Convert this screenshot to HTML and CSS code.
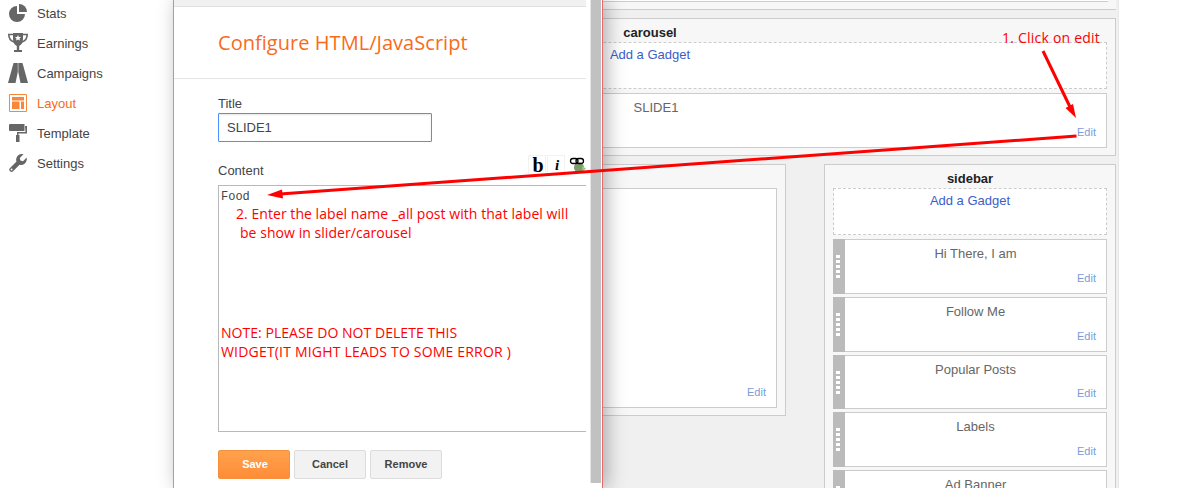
FILE: index.html
```html
<!DOCTYPE html>
<html lang="en">
<head>
<meta charset="utf-8">
<title>Configure HTML/JavaScript</title>
<link rel="stylesheet" href="styles.css">
</head>
<body>
<div class="page">
  <nav class="nav">
    <a class="nav-item">
      <svg class="nav-icon" viewBox="-1 -1 20 20"><path d="M8 2a8 8 0 1 0 8 8H8z"/><path d="M10 0a8 8 0 0 1 8 8h-8z"/></svg>
      <span>Stats</span>
    </a>
    <a class="nav-item">
      <svg class="nav-icon" viewBox="0 0 20 20"><path d="M5 0h10v6c0 4-2 6-3.800 7v4H14v2H6v-2h2.800v-4C7 12 5 10 5 6z"/><path class="nav-stroke" d="M5 1.500H.8c0 4 2 6.500 5.200 7.500M15 1.500h4.200c0 4-2 6.500-5.200 7.500"/><path class="nav-star" d="M10 2l.9 1.900 2.100.2-1.500 1.400.4 2.100-1.900-1-1.900 1 .4-2.100L7 4.100l2.100-.2z"/></svg>
      <span>Earnings</span>
    </a>
    <a class="nav-item">
      <svg class="nav-icon" viewBox="0 0 20 20"><path d="M5.500 0h4.300v9L7.500 20H0z"/><path d="M10.300 0h4.200L20 20h-7.500l-2.200-11z"/></svg>
      <span>Campaigns</span>
    </a>
    <a class="nav-item nav-item-active">
      <svg class="nav-icon" viewBox="-1 -1 20 20"><path class="nav-frame" d="M.5 .5h17v17H.5z"/><path d="M3 3h12v3.500H3zM3 7.500h7.500V15H3zM12 7.500h3V15h-3z"/></svg>
      <span>Layout</span>
    </a>
    <a class="nav-item">
      <svg class="nav-icon" viewBox="-1 -1 20 20"><path d="M1 0h14.500v7H1a1 1 0 0 1-1-1V1a1 1 0 0 1 1-1z"/><path d="M16 2h2v7.500H9.500V11H10.500v7H7v-7h1V8h8.500z"/></svg>
      <span>Template</span>
    </a>
    <a class="nav-item">
      <svg class="nav-icon" viewBox="-1 -1 20 20"><path fill-rule="evenodd" d="M17.700 3.500 14 7.200l-2.600-.6-.6-2.600L14.500.3c-3-.9-6 .6-7 3.400-.5 1.300-.4 2.700 0 3.800L1 14c-1 1-1 2.500 0 3.300 1 .9 2.300.8 3.100-.1l6.400-6.500c1.400.4 3 .4 4.400-.5 2.300-1.400 3.400-4.200 2.800-6.700zM2.600 14.600a1 1 0 1 1 0 2 1 1 0 0 1 0-2z"/></svg>
      <span>Settings</span>
    </a>
  </nav>

  <main class="canvas">
    <section class="stub"><div class="stub-inner"></div></section>

    <section class="panel panel-carousel">
      <h3 class="panel-title">carousel</h3>
      <div class="add-box"><a class="add-link">Add a Gadget</a></div>
      <div class="widget widget-plain">
        <div class="widget-body"><span class="widget-name">SLIDE1</span><a class="edit">Edit</a></div>
      </div>
    </section>

    <div class="columns">
      <section class="panel panel-main">
        <div class="widget widget-tall">
          <div class="widget-body"><a class="edit">Edit</a></div>
        </div>
      </section>

      <section class="panel panel-sidebar">
        <h3 class="panel-title">sidebar</h3>
        <div class="add-box"><a class="add-link">Add a Gadget</a></div>
        <div class="widget widget-first"><div class="grip"><i></i></div><div class="widget-body"><span class="widget-name">Hi There, I am</span><a class="edit">Edit</a></div></div>
        <div class="widget"><div class="grip"><i></i></div><div class="widget-body"><span class="widget-name">Follow Me</span><a class="edit">Edit</a></div></div>
        <div class="widget widget-short"><div class="grip"><i></i></div><div class="widget-body"><span class="widget-name">Popular Posts</span><a class="edit">Edit</a></div></div>
        <div class="widget"><div class="grip"><i></i></div><div class="widget-body"><span class="widget-name">Labels</span><a class="edit">Edit</a></div></div>
        <div class="widget"><div class="grip"><i></i></div><div class="widget-body"><span class="widget-name">Ad Banner</span></div></div>
      </section>
    </div>
  </main>

  <div class="modal">
    <div class="modal-main">
      <div class="modal-strip"></div>
      <h2 class="modal-title">Configure HTML/JavaScript</h2>
      <form class="modal-form">
        <label class="field-label field-label-title">Title</label>
        <div class="input">SLIDE1</div>
        <div class="content-row">
          <label class="field-label">Content</label>
          <div class="tools">
            <span class="tool tool-b">b</span>
            <span class="tool tool-i">i</span>
            <span class="tool tool-link">
              <svg viewBox="0 0 20 20" width="20" height="20"><circle cx="13" cy="12.500" r="5" fill="#7d9c6c"/><path d="M16 11l4 2.500-3.500 3.500z" fill="#8fcf7a"/><rect x="4.500" y="3.500" width="7.500" height="5" rx="2.500" fill="none" stroke="#000" stroke-width="1.300"/><rect x="10" y="3.500" width="7.500" height="5" rx="2.500" fill="none" stroke="#000" stroke-width="1.300"/></svg>
            </span>
          </div>
        </div>
        <div class="textarea">Food</div>
        <div class="actions">
          <button type="button" class="btn btn-primary">Save</button>
          <button type="button" class="btn">Cancel</button>
          <button type="button" class="btn">Remove</button>
        </div>
      </form>
    </div>
    <div class="scroll"><div class="scroll-thumb"></div></div>
  </div>

  <svg class="arrows" viewBox="0 0 1177 488" width="1177" height="488">
    <path class="arrow-line" d="M1043 51 1071 109"/>
    <path class="arrow-head" d="M1076 118 1065.500 108 1073 104z"/>
    <path class="arrow-line" d="M1076.500 136 280 194"/>
    <path class="arrow-head" d="M267 195 282 189.500 283 198.500z"/>
  </svg>

  <span class="note note-1">1. Click on edit</span>
  <span class="note note-2">2. Enter the label name _all post with that label will</span>
  <span class="note note-3">be show in slider/carousel</span>
  <span class="note note-4">NOTE: PLEASE DO NOT DELETE THIS</span>
  <span class="note note-5">WIDGET(IT MIGHT LEADS TO SOME ERROR )</span>
</div>
</body>
</html>
```
FILE: styles.css
```css
* { box-sizing: border-box; }
html, body { margin: 0; padding: 0; background: #fff; }
body { font-family: "Liberation Sans", Arial, sans-serif; font-size: 13px; color: #444; }

.page { position: relative; display: flex; width: 1177px; height: 488px; overflow: hidden; background: #fff; }

/* left navigation */
.nav { flex: none; width: 173px; display: flex; flex-direction: column; gap: 6px; padding: 1px 0 0 8px; }
.nav-item { display: flex; align-items: center; height: 24px; gap: 9px; color: #444; fill: #666; }
.nav-icon { width: 20px; height: 20px; flex: none; }
.nav-item-active { color: #f96b1b; fill: #f8873a; }
.nav-stroke { fill: none; stroke: #666; stroke-width: 1.600; }
.nav-star { fill: #fff; }
.nav-frame { fill: none; stroke: #f8873a; stroke-width: 1; }

/* layout canvas */
.canvas { flex: none; width: 946px; height: 488px; padding: 0 2px 0 11px; background: #f0f0f0; border-right: 1px solid #e8e8e8; display: flex; flex-direction: column; gap: 8px; overflow: hidden; }
.stub { flex: none; height: 10px; background: #f7f7f7; border-bottom: 1px solid #ccc; padding: 0 8px; }
.stub-inner { height: 2px; background: #fff; border-bottom: 1px solid #ccc; }
.panel { background: #f7f7f7; border: 1px solid #ccc; padding: 0 8px; }
.panel-carousel { flex: none; height: 138px; }
.panel-title { margin: 0; height: 23px; padding-top: 6px; font-size: 13px; line-height: 15px; font-weight: bold; color: #222; text-align: center; }
.add-box { height: 47px; border: 1px dashed #ccc; background: #fff; text-align: center; line-height: 24px; }
.add-link { color: #3b5ec8; }
.widget { display: flex; height: 55px; margin-top: 3px; background: #fff; border: 1px solid #ccc; }
.widget-first { margin-top: 4px; }
.widget-short { height: 54px; }
.widget-plain { margin-top: 4px; padding-left: 12px; }
.grip { flex: none; width: 12px; margin: -1px 0 -1px -1px; background: #bbb; display: flex; justify-content: center; align-items: center; padding-right: 2px; }
.grip i { display: block; width: 4px; height: 23px; background: repeating-linear-gradient(#fff 0 3px, transparent 3px 5px); }
.widget-body { flex: 1; min-width: 0; display: flex; flex-direction: column; padding: 6px 10px 8px; }
.widget-name { color: #666; font-size: 13px; line-height: 15px; text-align: center; }
.edit { margin-top: auto; align-self: flex-end; font-size: 11px; line-height: 13px; color: #7b9bd8; }

.columns { flex: none; display: flex; gap: 38px; height: 340px; }
.panel-main { flex: 1; height: 252px; padding-top: 23px; }
.panel-sidebar { flex: none; width: 292px; height: 340px; }
.widget-tall { height: 220px; margin: 0; padding-left: 12px; }

/* modal */
.modal { position: absolute; left: 173px; top: 0; width: 430px; height: 488px; display: flex; background: #fff; border-left: 1px solid #d98a8a; border-right: 1px solid #e8696a; box-shadow: 4px 0 18px rgba(0, 0, 0, .3); }
.modal-main { flex: none; width: 412px; overflow: hidden; }
.modal-strip { height: 7px; background: #f1f1f1; border-bottom: 1px solid #e0e0e0; }
.modal-title { margin: 0; height: 72px; padding: 21px 0 0 44px; border-bottom: 1px solid #e5e5e5; font-family: "Open Sans", sans-serif; font-size: 20px; line-height: 30px; letter-spacing: .04px; font-weight: 400; color: #f96b1b; }
.modal-form { padding: 0 0 0 44px; }
.field-label { display: block; font-size: 13px; line-height: 15px; color: #444; }
.field-label-title { padding-top: 17px; height: 34px; }
.input { width: 214px; height: 29px; padding: 0 8px; border: 1px solid #4d90fe; border-radius: 1px; line-height: 27px; color: #444; box-shadow: inset 0 1px 2px rgba(0, 0, 0, .1); }
.content-row { display: flex; justify-content: space-between; align-items: flex-end; height: 34px; width: 368px; }
.content-row .field-label { margin-bottom: -2px; }
.tools { display: flex; gap: 1px; margin-bottom: 1px; }
.tool { display: flex; align-items: center; justify-content: center; width: 18px; height: 20px; background: #fff; color: #000; border: 1px solid #f2f2f2; font-family: "Liberation Serif", serif; font-weight: bold; line-height: 18px; }
.tool-b { font-size: 20px; padding-left: 2px; }
.tool-i { font-style: italic; font-size: 15px; padding-left: 2px; }
.tool-link { width: 20px; border: 0; }
.textarea { width: 400px; height: 247px; margin-top: 9px; padding: 3px 2px; border: 1px solid #b9b9b9; font-family: "Liberation Mono", monospace; font-size: 12px; line-height: 16px; color: #444; }
.actions { display: flex; gap: 4px; margin-top: 18px; }
.btn { width: 72px; height: 29px; padding: 0 0 1px; border: 1px solid #dcdcdc; border-radius: 2px; background: #f2f2f2; font-family: "Liberation Sans", Arial, sans-serif; font-size: 11px; font-weight: bold; color: #444; }
.btn-primary { border-color: #f5913e; background: linear-gradient(#ffa24d, #ff8c37); color: #fff; padding-left: 2px; }

.scroll { flex: 1; padding: 0 1px 5px 5px; }
.scroll-thumb { width: 10px; height: 100%; background: #c1c1c1; box-shadow: -1px 0 0 #e6e6e6; }

/* annotations over the screenshot */
.arrows { position: absolute; left: 0; top: 0; pointer-events: none; }
.arrow-line { fill: none; stroke: #f00; stroke-width: 3; }
.arrow-head { fill: #f00; }
.note { position: absolute; white-space: nowrap; font-family: "Open Sans", sans-serif; font-size: 14px; line-height: 18px; color: #f00; }
.note-1 { left: 1002px; top: 29px; letter-spacing: .22px; }
.note-2 { left: 236px; top: 205px; letter-spacing: .05px; }
.note-3 { left: 240px; top: 224px; letter-spacing: .05px; }
.note-4 { left: 221px; top: 324px; letter-spacing: .04px; }
.note-5 { left: 221px; top: 343px; letter-spacing: .19px; }
```
